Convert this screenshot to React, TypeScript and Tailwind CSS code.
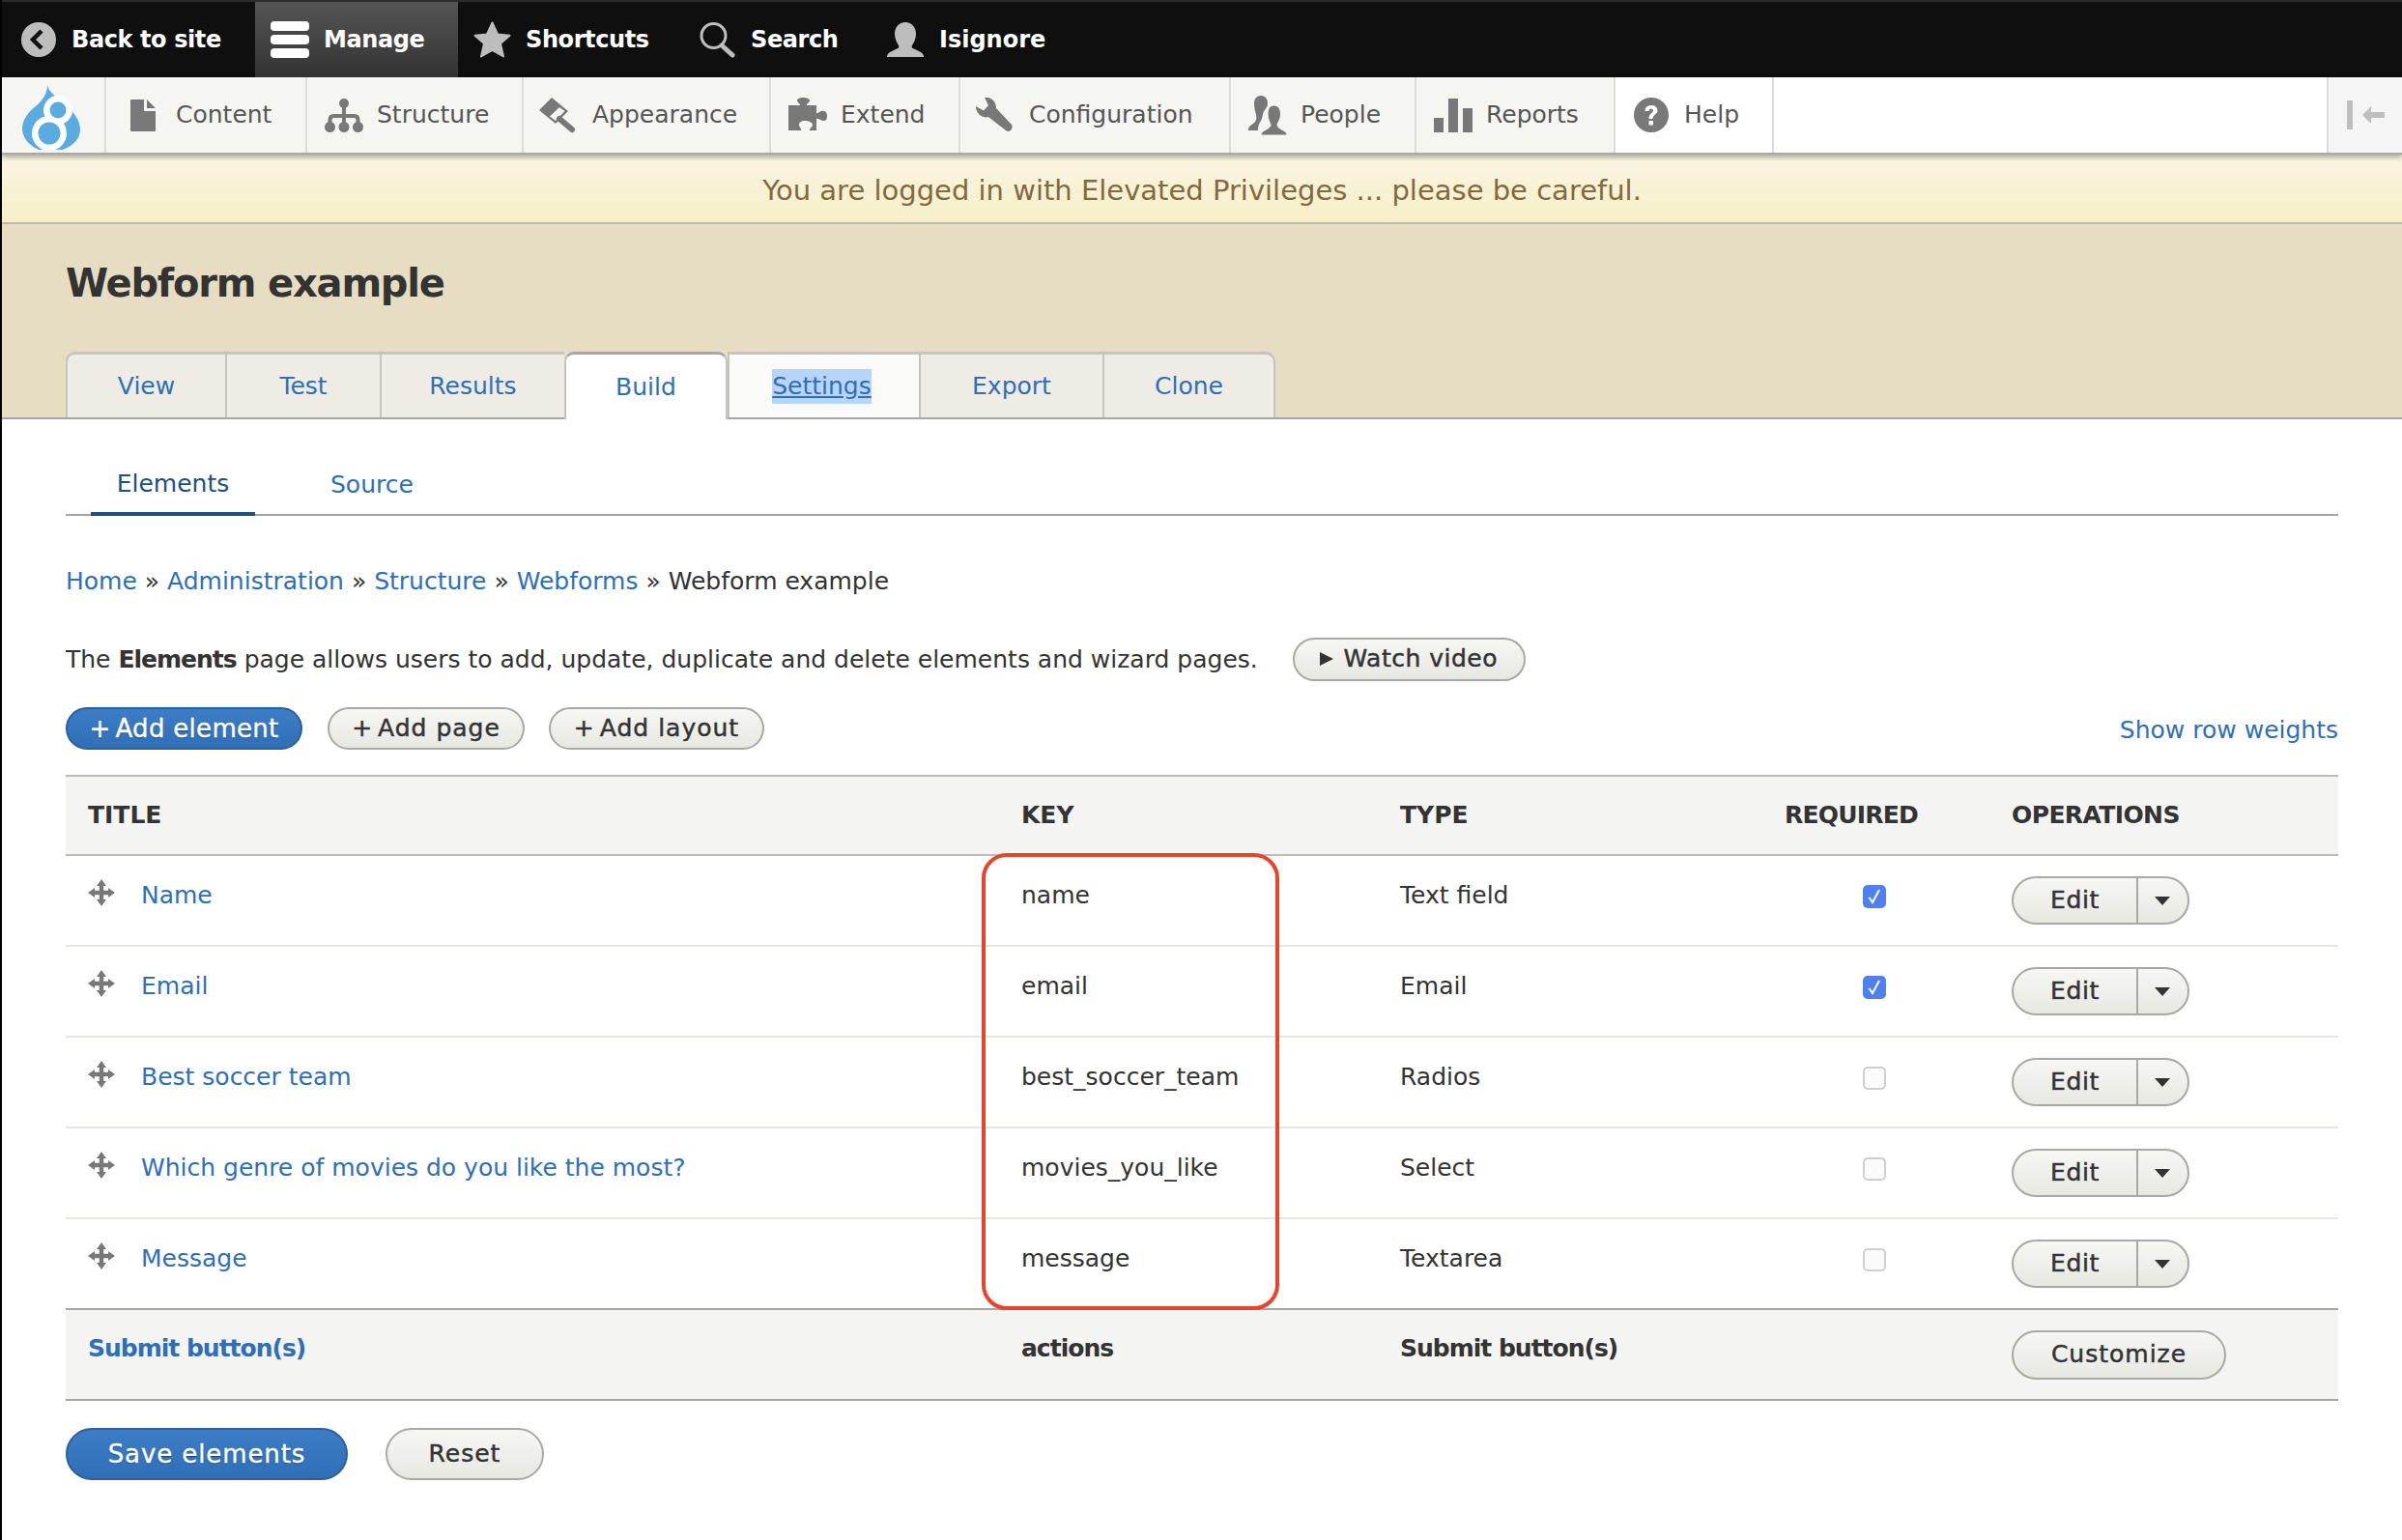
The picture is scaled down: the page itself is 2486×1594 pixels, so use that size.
import React from "react";

const Back = () => (
  <svg width="36" height="36" viewBox="0 0 36 36"><circle cx="18" cy="18" r="18" fill="#bdbdbd" /><path d="M21 9l-9 9 9 9" fill="none" stroke="#111" strokeWidth="4.5" /></svg>
);
const Burger = () => (
  <svg width="40" height="38" viewBox="0 0 40 38"><rect y="0" width="40" height="10" rx="4" fill="#fff" /><rect y="14" width="40" height="10" rx="4" fill="#fff" /><rect y="28" width="40" height="10" rx="4" fill="#fff" /></svg>
);
const Star = () => (
  <svg width="39" height="38" viewBox="0 0 39 38"><path d="M19.500 1.500L25 13.500 37.500 14.800 28 23 31 36.500 19.500 30 8 36.500 11 23 1.500 14.800 14 13.500z" fill="#bdbdbd" stroke="#bdbdbd" strokeWidth="2" strokeLinejoin="round" /></svg>
);
const Mag = () => (
  <svg width="38" height="38" viewBox="0 0 38 38"><circle cx="14.500" cy="15" r="12.500" fill="none" stroke="#bdbdbd" strokeWidth="3" /><path d="M23 25l11 10" stroke="#bdbdbd" strokeWidth="5" strokeLinecap="round" /></svg>
);
const User = () => (
  <svg width="38" height="36" viewBox="0 0 38 36"><path d="M19 0c6.500 0 11 5 11 12 0 5-2 9-4 12-1 2 0 3 3 4l6 3c2 1 3 3 3 5H0c0-2 1-4 3-5l6-3c3-1 4-2 3-4-2-3-4-7-4-12C8 5 12.500 0 19 0z" fill="#bdbdbd" /></svg>
);
const Doc = () => (
  <svg width="26" height="33" viewBox="0 0 26 33"><path d="M0 1a1 1 0 011-1h13v12h12v20a1 1 0 01-1 1H1a1 1 0 01-1-1zM17 0l9 9h-9z" fill="#787878" /></svg>
);
const Tree = () => (
  <svg width="40" height="35" viewBox="0 0 40 35"><g fill="#787878"><circle cx="20" cy="5" r="5" /><circle cx="5.500" cy="29.500" r="5.500" /><circle cx="20" cy="29.500" r="5.500" /><circle cx="34.500" cy="29.500" r="5.500" /></g><path d="M20 5v24M5.500 29v-7q0-4 4-4h21q4 0 4 4v7" fill="none" stroke="#787878" strokeWidth="4" /></svg>
);
const Brush = () => (
  <svg width="38" height="37" viewBox="0 0 38 37"><path d="M13 0L30 14 17 27 0 13zM21 10l-10 9.500 6 4.500 9.500-10z" fill="#787878" fillRule="evenodd" /><path d="M21 22l13 11" stroke="#787878" strokeWidth="6" strokeLinecap="round" /></svg>
);
const Puzzle = () => (
  <svg width="40" height="36" viewBox="0 0 40 36"><path d="M0 8h12c1-1-3-3-3-5 0-2 3-3 6-3s7 1 7 3c0 2-4 4-3 5h10v8c2 1 4-3 7-2 3 0 4 2 4 5s-1 5-4 5c-3 0-5-3-7-2v12H22c-1-2 3-3 3-6 0-2-4-4-8-4s-6 2-6 4c0 3 3 4 2 6H0z" fill="#787878" /></svg>
);
const Wrench = () => (
  <svg width="38" height="37" viewBox="0 0 38 37"><path d="M0 9l8 4.500L13 8 9 0C15-1 21 3 21 11L37 28C39 32 35 37 31 34L13 20C6 22 0 16 0 9z" fill="#787878" /></svg>
);
const People = () => (
  <svg width="40" height="41" viewBox="0 0 40 41"><path d="M13 0C18 0 20 4 20 8 20 11 18 13 17 15 15 17 15 20 14 24 12 28 10 30 10 36H0C0 32 2 31 5 29 8 27 9 24 8 20 7 16 6 12 6 8 6 3 9 0 13 0Z" fill="#787878" /><path d="M26.500 10C31 10 33.500 14 33.500 19 33.500 24 31 27 30 30 30 33 33 34 36 36 38 37 40 38 40 41H13C13 38 15 37 17 36 20 34 23 33 23 30 22 27 20 24 20 19 20 14 22 10 26.500 10Z" fill="#787878" stroke="#f5f5f2" strokeWidth="1" /></svg>
);
const Bars = () => (
  <svg width="40" height="35" viewBox="0 0 40 35"><rect x="0" y="20" width="10" height="15" fill="#787878" /><rect x="15" y="0" width="10" height="35" fill="#787878" /><rect x="30" y="10" width="10" height="25" fill="#787878" /></svg>
);
const Help = () => (
  <svg width="36" height="36" viewBox="0 0 36 36"><circle cx="18" cy="18" r="18" fill="#787878" /><path d="M11.500 14c0-4 3-6 6.500-6s6.500 2 6.500 5.500c0 4-5 4-5 8.500h-4c0-6 4.500-6 4.500-8.500 0-1-1-2-2-2-1.500 0-2.500 1-2.500 2.500zM15.500 24h4.500v4.500h-4.500z" fill="#fff" /></svg>
);
const Collapse = () => (
  <svg width="39" height="30" viewBox="0 0 39 30"><rect x="0" y="0" width="6" height="30" fill="#bfbfbf" /><path d="M16 15L25 6v6h14v6H25v6z" fill="#bfbfbf" /></svg>
);
const Logo = () => (
  <svg width="60" height="67" viewBox="0 0 60 67">
    <path d="M26 0c1 7 9 12 19 21 8 7 15 15 15 25 0 9-6 16-18 21H17C6 62 0 54 0 45c0-9 7-18 15-24C22 15 26 8 26 0z" fill="#5aabdf" />
    <circle cx="37" cy="26" r="15" fill="#fff" />
    <circle cx="28" cy="50" r="18" fill="#fff" />
    <circle cx="37" cy="26" r="8.500" fill="#5aabdf" />
    <circle cx="28" cy="50" r="11.500" fill="#5aabdf" />
  </svg>
);
const Drag = () => (
  <svg width="28" height="28" viewBox="0 0 28 28"><path d="M14 0l5 7h-2.800v4.800H21V9l7 5-7 5v-2.800h-4.800V21H19l-5 7-5-7h2.800v-4.800H7V19l-7-5 7-5v2.800h4.800V7H9z" fill="#787878" /></svg>
);
const Check = ({ on }: { on: boolean }) =>
  on ? (
    <span className="flex h-[24px] w-[24px] items-center justify-center rounded-[5px] bg-[#4f81ee]">
      <svg width="16" height="18" viewBox="0 0 16 18"><path d="M2.500 10l3.500 5L13 2" fill="none" stroke="#fff" strokeWidth="2" /></svg>
    </span>
  ) : (
    <span className="block h-[24px] w-[24px] rounded-[5px] border-2 border-[#cfcfcf] bg-[#fbfbfb]" />
  );

const Btn = ({ children, w, h = "h-[45px]" }: { children: React.ReactNode; w: string; h?: string }) => (
  <span className={`inline-flex items-center justify-center rounded-full border-2 border-[#a8a8a4] bg-gradient-to-b from-[#f6f6f3] to-[#e8e8e3] tracking-[1px] text-[#333] [-webkit-text-stroke:0.5px_#333] [text-shadow:0_1px_0_#fff] ${w} ${h}`}>
    {children}
  </span>
);

const topItems = [
  { label: "Back to site", icon: <Back />, cls: "w-[262px] pl-[20px]", box: "w-[52px]" },
  { label: "Manage", icon: <Burger />, cls: "w-[210px] pl-[16px] bg-gradient-to-b from-[#555] to-[#333]", box: "w-[55px]" },
  { label: "Shortcuts", icon: <Star />, cls: "w-[234px] pl-[16px]", box: "w-[54px]" },
  { label: "Search", icon: <Mag />, cls: "w-[194px] pl-[16px]", box: "w-[53px]" },
  { label: "Isignore", icon: <User />, cls: "pl-[16px] tracking-[0px]", box: "w-[54px]" },
];

const menuItems = [
  { label: "Content", icon: <Doc />, cls: "w-[208px] pl-[25px]", box: "w-[47px]" },
  { label: "Structure", icon: <Tree />, cls: "w-[224px] pl-[18px]", box: "w-[54px]" },
  { label: "Appearance", icon: <Brush />, cls: "w-[256px] pl-[16px]", box: "w-[55px]" },
  { label: "Extend", icon: <Puzzle />, cls: "w-[196px] pl-[18px]", box: "w-[54px]" },
  { label: "Configuration", icon: <Wrench />, cls: "w-[280px] pl-[16px]", box: "w-[55px]" },
  { label: "People", icon: <People />, cls: "w-[192px] pl-[18px]", box: "w-[54px]" },
  { label: "Reports", icon: <Bars />, cls: "w-[206px] pl-[18px]", box: "w-[54px]" },
  { label: "Help", icon: <Help />, cls: "w-[164px] pl-[19px] bg-white", box: "w-[52px]" },
];

const tabs = [
  { label: "View", cls: "w-[165px] bg-[#eeece4] rounded-tl-[10px]" },
  { label: "Test", cls: "w-[160px] bg-[#eeece4]" },
  { label: "Results", cls: "w-[191px] bg-[#eeece4]" },
  { label: "Build", cls: "w-[169px] bg-white rounded-t-[10px] h-[70px] -mb-[2px] border-t-[#a6a6a6] border-l-2 border-r-2 border-r-[#c4c4c0] border-l-[#c4c4c0]" },
  { label: "Settings", cls: "w-[198px] bg-[#fafaf8] pr-[5px]" },
  { label: "Export", cls: "w-[190px] bg-[#eeece4]" },
  { label: "Clone", cls: "w-[179px] bg-[#eeece4] rounded-tr-[10px] border-r-2" },
];

const rows = [
  { t: "Name", k: "name", y: "Text field", c: true },
  { t: "Email", k: "email", y: "Email", c: true },
  { t: "Best soccer team", k: "best_soccer_team", y: "Radios", c: false },
  { t: "Which genre of movies do you like the most?", k: "movies_you_like", y: "Select", c: false },
  { t: "Message", k: "message", y: "Textarea", c: false },
];

export default function App() {
  return (
    <div className="relative h-[1594px] w-[2486px] overflow-hidden border-l-2 border-black bg-white font-['DejaVu_Sans',sans-serif] text-[25px] leading-[36px] text-[#333]">
      {/* top bar */}
      <div className="flex h-[80px] border-t-2 border-[#2b2b2b] bg-[#0f0f0f] text-[24px] font-bold tracking-[-0.4px] text-white">
        {topItems.map((i) => (
          <div key={i.label} className={`flex items-center ${i.cls}`}>
            <span className={`flex shrink-0 ${i.box}`}>{i.icon}</span>
            <span>{i.label}</span>
          </div>
        ))}
      </div>
      {/* menu */}
      <div className="relative z-10 flex h-[80px] border-b-2 border-[#a9a9a6] bg-white text-[#565656] shadow-[0_3px_5px_rgba(0,0,0,0.3)]">
        <div className="flex w-[108px] items-center justify-center border-r-2 border-[#dcdcd9] bg-[#f5f5f2] pr-[4px] pt-[4px]"><Logo /></div>
        {menuItems.map((i) => (
          <div key={i.label} className={`flex items-center border-r-2 border-[#dcdcd9] ${i.label === "Help" ? "" : "bg-[#f5f5f2]"} ${i.cls}`}>
            <span className={`flex shrink-0 ${i.box}`}>{i.icon}</span>
            <span>{i.label}</span>
          </div>
        ))}
        <div className="flex-1" />
        <div className="flex w-[78px] items-center justify-center border-l-2 border-[#dcdcd9] bg-[#f5f5f5]"><Collapse /></div>
      </div>
      {/* banner */}
      <div className="flex h-[72px] items-center justify-center border-b-2 border-[#c0baa6] bg-gradient-to-b from-[#f9f5e2] to-[#f7efc9] pt-[3px] text-[29px] text-[#84693d]">
        You are logged in with Elevated Privileges ... please be careful.
      </div>
      {/* header */}
      <div className="h-[202px] border-b-2 border-[#a6a6a6] bg-[#e6ddc2] pl-[66px]">
        <h1 className="pt-[38px] text-[40px] leading-[46px] font-bold tracking-[-1.2px] text-[#333]">Webform example</h1>
        <div className="mt-[48px] flex items-start">
          {tabs.map((t) => (
            <div key={t.label} className={`flex h-[68px] items-center justify-center border-t-[3px] border-l-2 border-[#c4c4c0] pt-[1px] text-[#2d6fb9] ${t.cls}`}>
              {t.label === "Settings" ? <span className="bg-[#b7d4f9] underline">{t.label}</span> : t.label}
            </div>
          ))}
        </div>
      </div>
      {/* main */}
      <div className="px-[66px]">
        <div className="flex h-[100px] border-b-2 border-[#a6a6a6]">
          <div className="ml-[26px] flex h-[100px] w-[170px] items-center justify-center border-b-4 border-[#1f4e7f] pt-[38px] text-[#1f4e7f]">Elements</div>
          <div className="ml-[78px] flex h-[100px] items-center pt-[35px] text-[#2d6fb9]">Source</div>
        </div>
        <div className="mt-[50px] h-[36px]">
          <span className="text-[#2d6fb9]">Home</span> » <span className="text-[#2d6fb9]">Administration</span> » <span className="text-[#2d6fb9]">Structure</span> » <span className="text-[#2d6fb9]">Webforms</span> » Webform example
        </div>
        <div className="mt-[39px] flex h-[46px] items-center">
          <span className="pt-[2px]">The <b className="font-bold tracking-[-1px]">Elements</b> page allows users to add, update, duplicate and delete elements and wizard pages.</span>
          <span className="ml-[36px]">
            <Btn w="w-[241px]"><span className="mr-[10px] h-0 w-0 border-y-[7px] border-l-[14px] border-y-transparent border-l-[#333]" /><span className="tracking-[0.5px]">Watch video</span></Btn>
          </span>
        </div>
        <div className="mt-[27px] flex h-[44px] items-center">
          <span className="inline-flex h-[44px] w-[245px] items-center justify-center rounded-full border-2 border-[#2b5f9e] bg-gradient-to-b from-[#3d7dc6] to-[#2f6fb6] text-[26px] tracking-[0.3px] text-white [-webkit-text-stroke:0.4px_#fff] [text-shadow:0_1px_1px_#1c4474]"><span className="mr-[5px]">+</span>Add element</span>
          <span className="ml-[26px]"><Btn w="w-[204px]" h="h-[44px]"><span className="mr-[5px]">+</span>Add page</Btn></span>
          <span className="ml-[25px]"><Btn w="w-[223px]" h="h-[44px]"><span className="mr-[5px]">+</span>Add layout</Btn></span>
          <span className="ml-auto pt-[4px] text-[#2d6fb9]">Show row weights</span>
        </div>
        {/* table */}
        <div className="relative mt-[26px]">
          <table className="w-full table-fixed border-collapse">
            <colgroup>
              <col className="w-[966px]" />
              <col className="w-[392px]" />
              <col className="w-[398px]" />
              <col className="w-[235px]" />
              <col />
            </colgroup>
            <thead>
              <tr className="h-[82px] border-y-2 border-[#bcbcb9] bg-[#f4f4f2] text-left uppercase">
                <th className="pl-[23px] font-bold">Title</th>
                <th className="pl-[23px] font-bold">Key</th>
                <th className="pl-[23px] font-bold">Type</th>
                <th className="pl-[23px] font-bold tracking-[-0.8px]">Required</th>
                <th className="pl-[23px] font-bold tracking-[-0.6px]">Operations</th>
              </tr>
            </thead>
            <tbody>
              {rows.map((r, n) => (
                <tr key={r.k} className={`h-[94px] border-b-2 ${n === 4 ? "border-[#a6a6a6]" : "border-[#e6e6e1]"}`}>
                  <td className="pl-[23px] pb-[11px] align-middle">
                    <span className="flex items-center gap-[27px] text-[#2d6fb9]"><span className="mb-[6px] flex"><Drag /></span>{r.t}</span>
                  </td>
                  <td className="pl-[23px] pb-[11px]">{r.k}</td>
                  <td className="pl-[23px] pb-[11px]">{r.y}</td>
                  <td className="pl-[104px] pb-[9px]"><Check on={r.c} /></td>
                  <td className="pl-[23px]">
                    <span className="flex h-[50px] w-[184px] items-stretch rounded-full border-2 border-[#a8a8a4] bg-gradient-to-b from-[#f6f6f3] to-[#e8e8e3] tracking-[0.6px] [-webkit-text-stroke:0.5px_#333] [text-shadow:0_1px_0_#fff]">
                      <span className="flex w-[129px] items-center justify-center border-r-2 border-[#a8a8a4]">Edit</span>
                      <span className="flex flex-1 items-center justify-center pr-[2px]">
                        <span className="h-0 w-0 border-x-[8px] border-t-[9px] border-x-transparent border-t-[#333]" />
                      </span>
                    </span>
                  </td>
                </tr>
              ))}
              <tr className="h-[94px] border-b-2 border-[#a6a6a6] bg-[#f4f4f2] font-bold tracking-[-1px]">
                <td className="pl-[23px] pb-[13px] text-[#2d6fb9]">Submit button(s)</td>
                <td className="pl-[23px] pb-[13px]">actions</td>
                <td className="pl-[23px] pb-[13px]" colSpan={2}>Submit button(s)</td>
                <td className="pl-[23px] font-normal"><Btn w="w-[222px]" h="h-[51px]">Customize</Btn></td>
              </tr>
            </tbody>
          </table>
          <div className="absolute left-[948px] top-[81px] h-[473px] w-[308px] rounded-[26px] border-4 border-[#e8442a]" />
        </div>
        <div className="mt-[28px] flex items-center">
          <span className="inline-flex h-[54px] w-[292px] items-center justify-center rounded-full border-2 border-[#2b5f9e] bg-gradient-to-b from-[#3d7dc6] to-[#2f6fb6] text-[26px] tracking-[0.9px] text-white [-webkit-text-stroke:0.4px_#fff] [text-shadow:0_1px_1px_#1c4474]">Save elements</span>
          <span className="ml-[39px]"><Btn w="w-[164px]" h="h-[54px]">Reset</Btn></span>
        </div>
      </div>
    </div>
  );
}
